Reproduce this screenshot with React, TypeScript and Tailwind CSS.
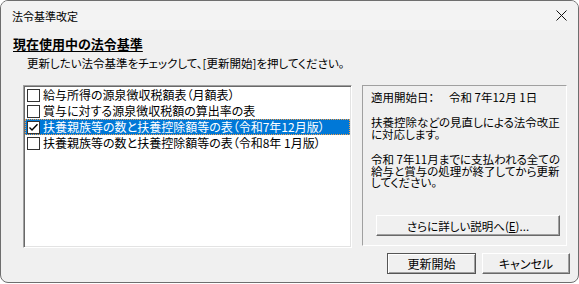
import React from "react";

const items = [
  { label: "給与所得の源泉徴収税額表（月額表）", checked: false, selected: false },
  { label: "賞与に対する源泉徴収税額の算出率の表", checked: false, selected: false },
  { label: "扶養親族等の数と扶養控除額等の表（令和7年12月版）", checked: true, selected: true },
  { label: "扶養親族等の数と扶養控除額等の表（令和8年 1月版）", checked: false, selected: false },
];

function CheckBox({ checked }: { checked: boolean }) {
  return (
    <div className="w-[13px] h-[13px] border border-[#333333] bg-white flex items-center justify-center shrink-0">
      {checked && (
        <svg width="11" height="11" viewBox="0 0 11 11">
          <path d="M1.5 5.5 L4 8 L9.5 2.2" stroke="#000" strokeWidth="1.4" fill="none" />
        </svg>
      )}
    </div>
  );
}

export default function App() {
  return (
    <div className="w-[579px] h-[284px] bg-white font-['Noto_Sans_CJK_JP',sans-serif] [font-feature-settings:'palt'] text-black">
      <div className="w-[579px] h-[283px] rounded-[8px] border border-[#6e6e6e] bg-[#f0f0f0] overflow-hidden flex flex-col">
        {/* title bar */}
        <div className="h-[29px] bg-[#f3f3f3] flex items-center justify-between pl-[11px] pr-[10px] shrink-0">
          <span className="text-[11px] leading-[14px]">法令基準改定</span>
          <svg width="11" height="11" viewBox="0 0 11 11" className="mr-[1px]">
            <path d="M0.5 0.5 L10.5 10.5 M10.5 0.5 L0.5 10.5" stroke="#111" strokeWidth="1" fill="none" />
          </svg>
        </div>
        {/* body */}
        <div className="flex flex-col flex-1">
          <div className="pl-[12px] pt-[6px] text-[13px] leading-[16px] h-[16px] box-content font-bold">
            <span className="underline underline-offset-[2px]">現在使用中の法令基準</span>
          </div>
          <div className="pl-[26px] mt-[5px] text-[11.5px] leading-[12px] h-[12px] whitespace-nowrap">
            更新したい法令基準をチェックして、[更新開始]を押してください。
          </div>
          <div className="flex mt-[16px] pl-[22px] gap-[10px]">
            {/* list box */}
            <div className="w-[329px] h-[163px] bg-white border border-t-[#a0a0a0] border-l-[#a0a0a0] border-r-white border-b-white shadow-[inset_1px_1px_0_#696969,inset_-1px_-1px_0_#e3e3e3] pt-px pl-px pr-px">
              {items.map((it, i) => (
                <div
                  key={i}
                  className={
                    it.selected
                      ? "h-[16px] flex items-center pl-[2px] gap-[3px] bg-[#0078d7] text-white outline outline-1 outline-dotted outline-[#f5a04a] -outline-offset-1"
                      : "h-[16px] flex items-center pl-[2px] gap-[3px]"
                  }
                >
                  <CheckBox checked={it.checked} />
                  <span className="text-[12px] leading-[14px] whitespace-nowrap">{it.label}</span>
                </div>
              ))}
            </div>
            {/* description panel */}
            <div className="w-[205px] h-[161px] border border-t-[#a0a0a0] border-l-[#a0a0a0] border-r-white border-b-white flex flex-col pl-[8px] pt-[5px]">
              <div className="flex text-[11.5px] leading-[12px] h-[12px] whitespace-nowrap">
                <span className="w-[78px]">適用開始日：</span>
                <span>令和 7年12月 1日</span>
              </div>
              <div className="mt-[14px] text-[11.5px] leading-[11.5px] whitespace-nowrap">
                扶養控除などの見直しによる法令改正
                <br />
                に対応します。
              </div>
              <div className="mt-[14px] text-[11.5px] leading-[11.5px] whitespace-nowrap">
                令和 7年11月までに支払われる全ての
                <br />
                給与と賞与の処理が終了してから更新
                <br />
                してください。
              </div>
              <div className="mt-auto mb-[9px] ml-[5px]">
                <button className="w-[184px] h-[21px] bg-[#f0f0f0] border border-t-white border-l-white border-r-[#696969] border-b-[#696969] shadow-[inset_-1px_-1px_0_#a0a0a0] text-[11.5px] leading-[12px] flex items-center justify-center">
                  さらに詳しい説明へ(<span className="underline">E</span>)...
                </button>
              </div>
            </div>
          </div>
          {/* buttons */}
          <div className="flex justify-end gap-[6px] pr-[8px] mt-[5px]">
            <button className="w-[89px] h-[21px] bg-[#f0f0f0] border border-[#555555] shadow-[inset_1px_1px_0_#ffffff,inset_-1px_-1px_0_#a0a0a0] text-[12px] leading-[12px] flex items-center justify-center">
              更新開始
            </button>
            <button className="w-[88px] h-[21px] bg-[#f0f0f0] border border-t-white border-l-white border-r-[#696969] border-b-[#696969] shadow-[inset_-1px_-1px_0_#a0a0a0] text-[12px] leading-[12px] flex items-center justify-center">
              キャンセル
            </button>
          </div>
        </div>
      </div>
    </div>
  );
}
